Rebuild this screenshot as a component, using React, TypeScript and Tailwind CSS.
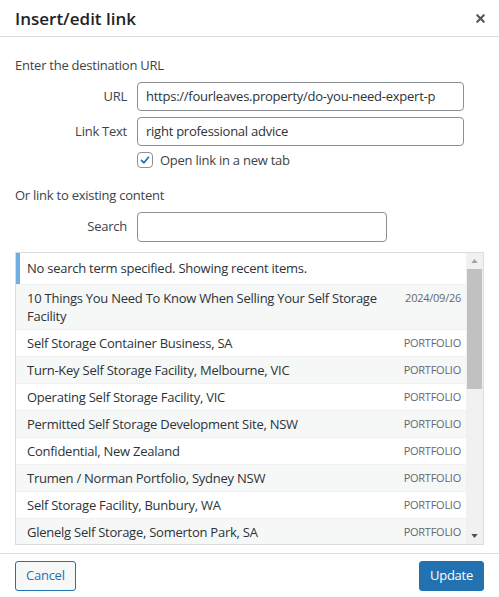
import { X } from "lucide-react";

const items: { title: string; meta: string }[] = [
  { title: "10 Things You Need To Know When Selling Your Self Storage Facility", meta: "2024/09/26" },
  { title: "Self Storage Container Business, SA", meta: "PORTFOLIO" },
  { title: "Turn-Key Self Storage Facility, Melbourne, VIC", meta: "PORTFOLIO" },
  { title: "Operating Self Storage Facility, VIC", meta: "PORTFOLIO" },
  { title: "Permitted Self Storage Development Site, NSW", meta: "PORTFOLIO" },
  { title: "Confidential, New Zealand", meta: "PORTFOLIO" },
  { title: "Trumen / Norman Portfolio, Sydney NSW", meta: "PORTFOLIO" },
  { title: "Self Storage Facility, Bunbury, WA", meta: "PORTFOLIO" },
  { title: "Glenelg Self Storage, Somerton Park, SA", meta: "PORTFOLIO" },
];

function Field({ label, value, width = "w-[327px]", height = "h-[29px]" }: { label: string; value: string; width?: string; height?: string }) {
  return (
    <div className="flex items-center">
      <label className="w-[112px] text-right text-[13px] text-[#3c434a]">{label}</label>
      <div
        className={`ml-[10px] ${width} ${height} border border-[#8c8f94] rounded-[4px] px-[8px] flex items-center text-[13px] text-[#2c3338] overflow-hidden whitespace-nowrap`}
      >
        {value}
      </div>
    </div>
  );
}

export default function App() {
  return (
    <div className="w-[499px] h-[597px] bg-white flex flex-col font-['Open_Sans',sans-serif] text-[#3c434a] overflow-hidden">
      {/* header */}
      <div className="h-[37px] shrink-0 border-b border-[#dcdcde] flex items-center justify-between pl-[15px] pr-[12px]">
        <h1 className="text-[17px] font-semibold text-[#1d2327] leading-none">Insert/edit link</h1>
        <X className="w-[13px] h-[13px] text-[#50575e]" strokeWidth={4} />
      </div>

      {/* body */}
      <div className="px-[15px] pt-[20px] flex-1 flex flex-col tracking-[-0.25px]">
        <p className="text-[13px] leading-[16px]">Enter the destination URL</p>
        <div className="mt-[9px] flex flex-col gap-[6px]">
          <Field label="URL" value="https://fourleaves.property/do-you-need-expert-p" />
          <Field label="Link Text" value="right professional advice" />
        </div>
        <div className="mt-[6px] ml-[122px] h-[16px] flex items-center gap-[7px]">
          <span className="w-[16px] h-[16px] border border-[#8c8f94] rounded-[4px] flex items-center justify-center">
            <svg viewBox="0 0 20 20" className="w-[16px] h-[16px]">
              <path d="M5 10.5 L8.5 14 L15 6" fill="none" stroke="#2271b1" strokeWidth="2.4" strokeLinecap="round" strokeLinejoin="round" />
            </svg>
          </span>
          <span className="text-[13px] leading-[16px]">Open link in a new tab</span>
        </div>

        <p className="mt-[19px] text-[13px] leading-[16px]">Or link to existing content</p>
        <div className="mt-[9px]">
          <Field label="Search" value="" width="w-[250px]" height="h-[30px]" />
        </div>

        {/* results */}
        <div className="mt-[10px] h-[293px] border border-[#dcdcde] flex">
          <div className="flex-1 overflow-hidden">
            <div className="h-[31px] border-l-4 border-[#72aee6] bg-white pl-[7px] flex items-center text-[13px] text-[#2c3338]">
              No search term specified. Showing recent items.
            </div>
            {items.map((it, i) => (
              <div
                key={it.title}
                className={`flex items-start justify-between pl-[11px] pr-[5px] py-[4px] border-t border-[#f0f0f1] ${i % 2 === 0 ? "bg-[#f6f7f7]" : "bg-white"}`}
              >
                <span className="text-[13px] leading-[18px] text-[#2c3338] pr-[20px]">{it.title}</span>
                <span className="text-[11px] leading-[18px] text-[#646970] uppercase whitespace-nowrap">{it.meta}</span>
              </div>
            ))}
          </div>
          <div className="w-[17px] bg-[#f1f1f1] flex flex-col items-center">
            <div className="h-[16px] flex items-center justify-center">
              <svg viewBox="0 0 8 5" className="w-[7px] h-[4px]"><path d="M0 5 L4 0 L8 5 Z" fill="#a3a3a3" /></svg>
            </div>
            <div className="w-[15px] h-[120px] bg-[#c1c1c1]" />
            <div className="flex-1" />
            <div className="h-[16px] flex items-center justify-center">
              <svg viewBox="0 0 8 5" className="w-[7px] h-[4px]"><path d="M0 0 L8 0 L4 5 Z" fill="#505050" /></svg>
            </div>
          </div>
        </div>
      </div>

      {/* footer */}
      <div className="h-[44px] shrink-0 border-t border-[#dcdcde] flex items-center justify-between px-[15px] tracking-[-0.25px]">
        <button className="h-[30px] px-[10px] border border-[#2271b1] rounded-[3px] bg-[#f6f7f7] text-[#2271b1] text-[13px]">Cancel</button>
        <button className="h-[30px] px-[10px] border border-[#2271b1] rounded-[3px] bg-[#2271b1] text-white text-[13px]">Update</button>
      </div>
    </div>
  );
}
